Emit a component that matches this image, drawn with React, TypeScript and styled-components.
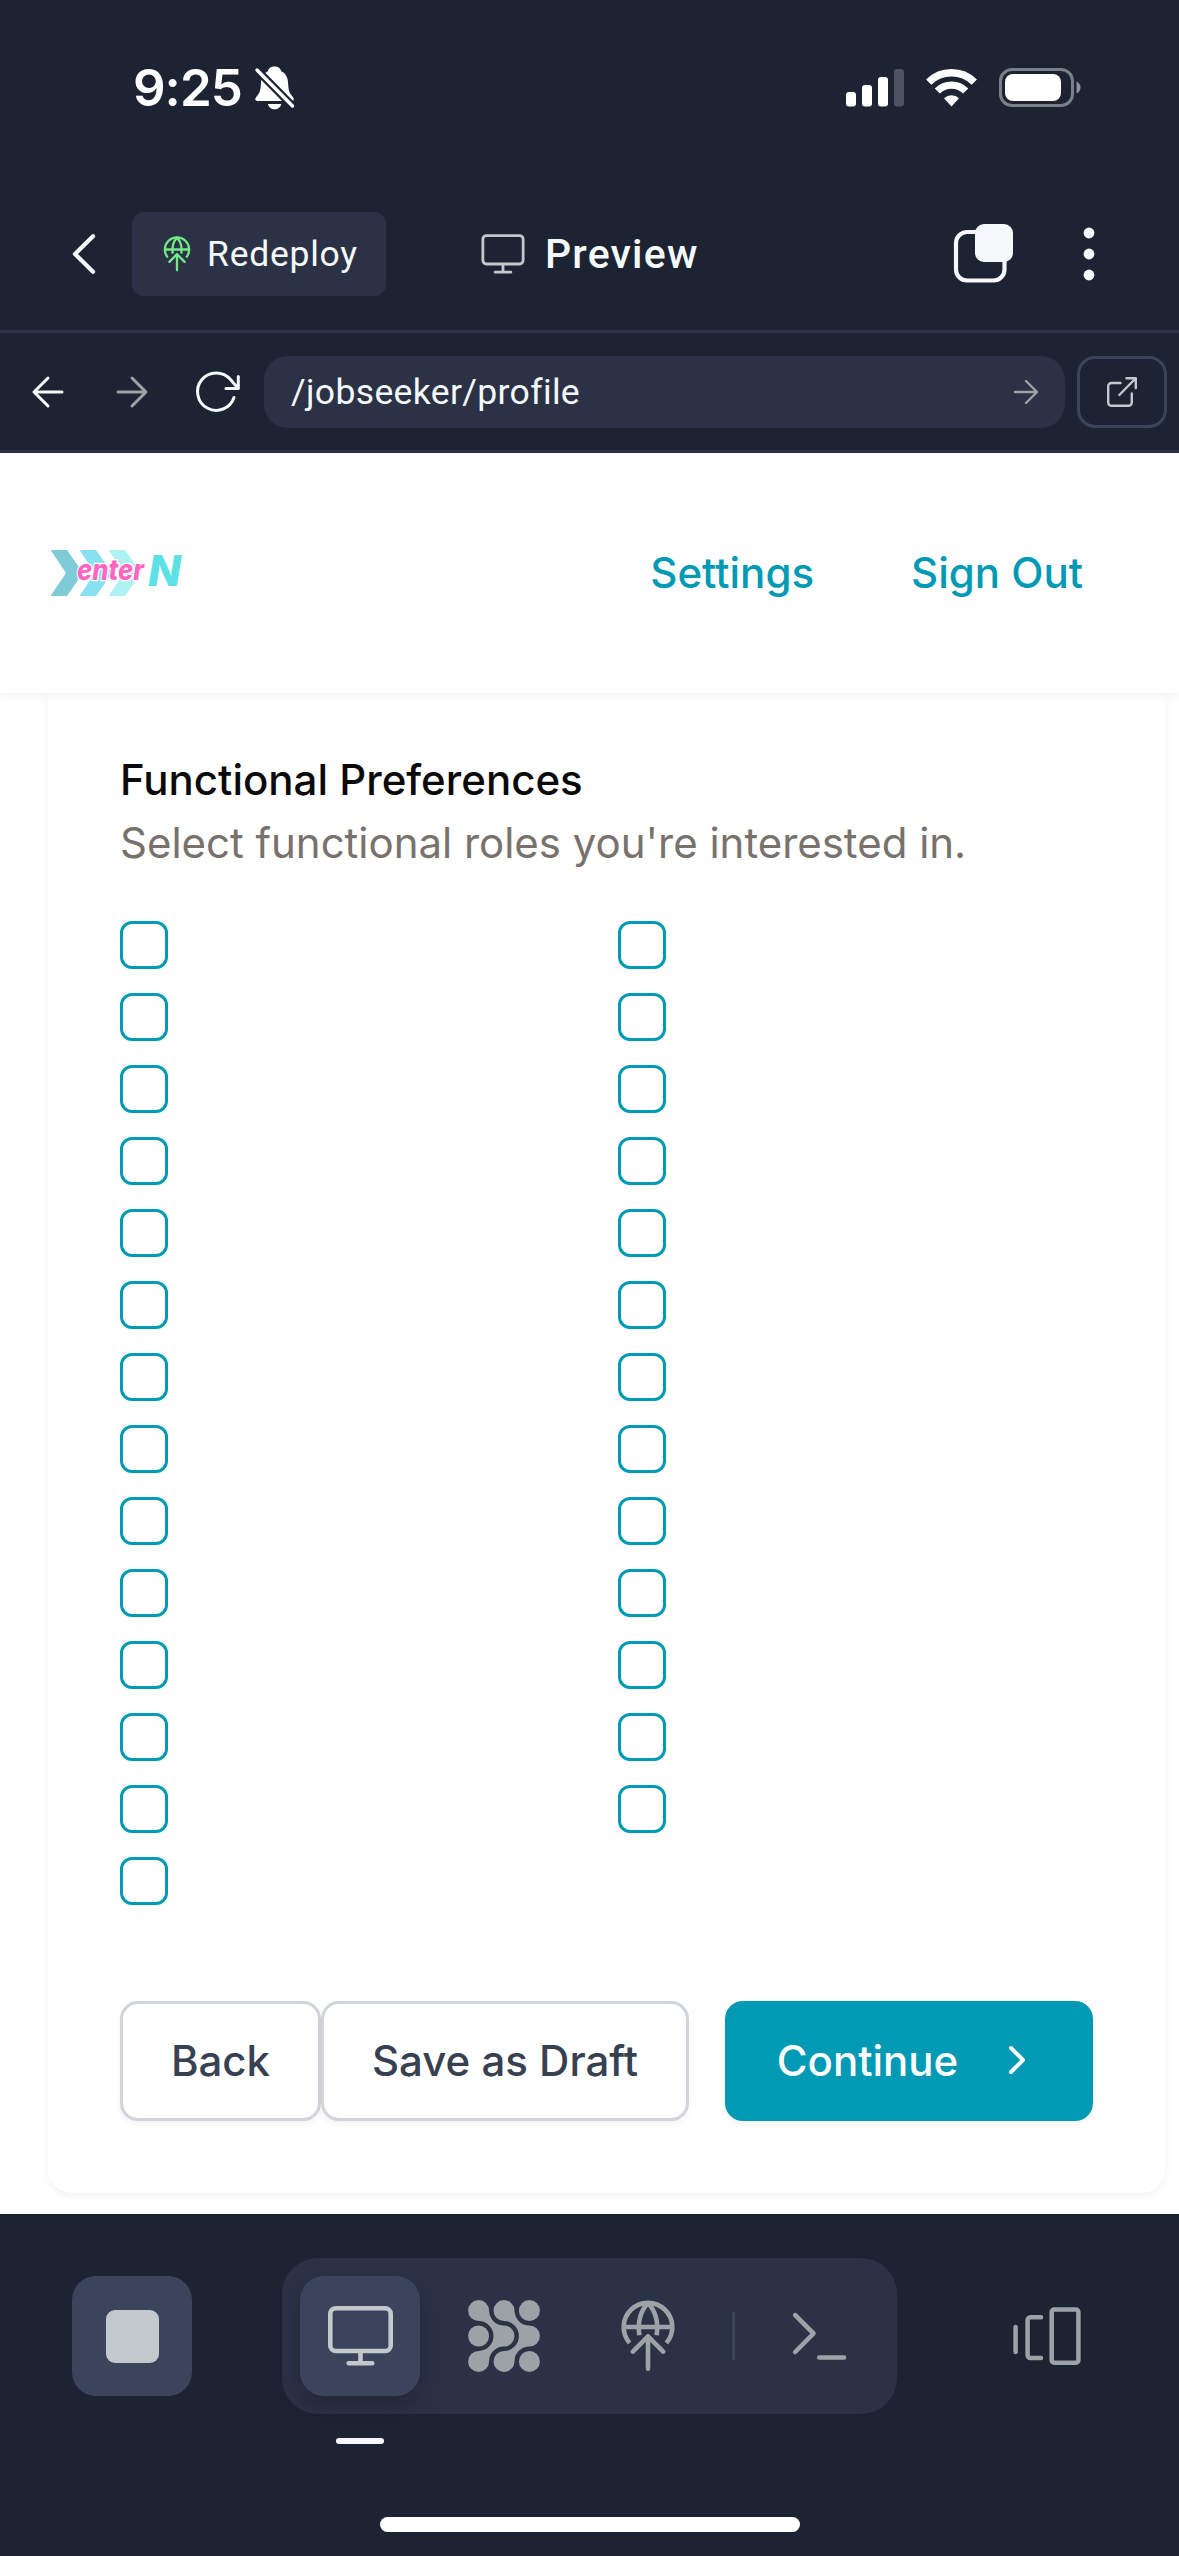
import React from "react";
import styled, { createGlobalStyle } from "styled-components";

const c = {
  root: "#1c2333",
  raised: "#2b3245",
  outline: "#3c445c",
  fg: "#f5f9fc",
  dim: "#c2c8cc",
  dimmest: "#9da2a6",
  teal: "#009ab5",
};

const ui = `Roboto, "Noto Sans", sans-serif`;

const GlobalStyle = createGlobalStyle`
  *, *::before, *::after { box-sizing: border-box; }
  body { margin: 0; background: ${c.root}; font-family: Inter, "Liberation Sans", sans-serif; }
  button { font: inherit; margin: 0; padding: 0; border: 0; background: none; color: inherit; }
  svg { display: block; flex: none; overflow: visible; }
`;

const Screen = styled.div`
  display: flex;
  flex-direction: column;
  width: 1179px;
  height: 2556px;
  overflow: hidden;
  background: ${c.root};
`;

const StatusBar = styled.div`
  display: flex;
  align-items: center;
  justify-content: space-between;
  height: 176px;
  padding: 0 98px 0 133px;
`;

const Clock = styled.div`
  display: flex;
  align-items: center;
  gap: 13px;
  color: #fff;
  font-size: 51px;
  font-weight: 600;
  line-height: 60px;
  letter-spacing: -1px;
`;

const StatusIcons = styled.div`
  display: flex;
  align-items: center;
  gap: 22px;
`;

const AppHeader = styled.header`
  display: flex;
  align-items: center;
  height: 157px;
  padding: 2px 84px 0 72px;
  border-bottom: 3px solid ${c.raised};
  font-family: ${ui};
  color: ${c.fg};
`;

const BackButton = styled.button`
  width: 60px;
`;

const RedeployButton = styled.button`
  display: flex;
  align-items: center;
  gap: 12px;
  width: 254px;
  height: 84px;
  padding-left: 27px;
  border-radius: 12px;
  background: ${c.raised};
  font-size: 35.5px;
  letter-spacing: 0.75px;
`;

const Title = styled.div`
  display: flex;
  align-items: center;
  gap: 20px;
  margin-left: 95px;
  font-size: 41px;
  font-weight: 500;
  letter-spacing: 1.2px;
`;

const HeaderActions = styled.div`
  display: flex;
  align-items: center;
  gap: 69px;
  margin-left: auto;
`;

const NavBar = styled.nav`
  display: flex;
  align-items: center;
  height: 120px;
  padding: 0 12px 0 6px;
  border-bottom: 3px solid ${c.raised};
`;

const NavButton = styled.button`
  display: flex;
  align-items: center;
  justify-content: center;
  width: 84px;
  height: 84px;
`;

const AddressField = styled.div`
  display: flex;
  align-items: center;
  justify-content: space-between;
  flex: 1;
  height: 72px;
  margin: 0 12px 0 6px;
  padding: 0 27px;
  border-radius: 24px;
  background: ${c.raised};
  color: ${c.fg};
  font-family: ${ui};
  font-size: 35.5px;
  letter-spacing: 0.35px;
`;

const OpenButton = styled.button`
  display: flex;
  align-items: center;
  justify-content: center;
  width: 90px;
  height: 72px;
  border: 3px solid ${c.outline};
  border-radius: 18px;
`;

const Page = styled.main`
  display: flex;
  flex-direction: column;
  height: 1761px;
  overflow: hidden;
  background: #fff;
`;

const SiteHeader = styled.header`
  position: relative;
  z-index: 1;
  display: flex;
  align-items: center;
  justify-content: space-between;
  flex: none;
  height: 240px;
  padding: 0 96px 0 48px;
  background: #fff;
  box-shadow: 0 3px 9px rgba(0, 0, 0, 0.05);
`;

const SiteLinks = styled.div`
  display: flex;
  gap: 97px;
`;

const SiteLink = styled.a`
  color: ${c.teal};
  font-size: 42px;
  font-weight: 500;
  line-height: 60px;
`;

const Card = styled.section`
  height: 1500px;
  margin: 0 14px 0 48px;
  padding: 55px 72px 0;
  border-radius: 0 0 24px 24px;
  background: #fff;
  box-shadow: 0 3px 9px rgba(0, 0, 0, 0.05);
`;

const Heading = styled.h2`
  margin: 0;
  color: #0a0a0a;
  font-size: 42px;
  font-weight: 500;
  line-height: 63px;
`;

const Description = styled.p`
  margin: 0;
  color: #78716c;
  font-size: 42px;
  line-height: 63px;
  letter-spacing: -0.02px;
`;

const CheckGrid = styled.div`
  display: grid;
  grid-template-columns: 1fr 1fr;
  gap: 24px 23px;
  margin-top: 47px;
`;

const Checkbox = styled.button`
  width: 48px;
  height: 48px;
  border: 3px solid ${c.teal};
  border-radius: 12px;
  background: #fff;
`;

const FormActions = styled.div`
  display: flex;
  justify-content: space-between;
  margin-top: 96px;
`;

const ActionGroup = styled.div`
  display: flex;
`;

const ActionButton = styled.button<{ $primary?: boolean; $width: number }>`
  display: flex;
  align-items: center;
  justify-content: center;
  gap: 35px;
  width: ${(p) => p.$width}px;
  height: 120px;
  padding-bottom: 2px;
  border: 3px solid ${(p) => (p.$primary ? c.teal : "#d1d5db")};
  border-radius: 18px;
  background: ${(p) => (p.$primary ? c.teal : "#fff")};
  color: ${(p) => (p.$primary ? "#fff" : "#374151")};
  font-size: 42px;
  font-weight: 500;
  box-shadow: 0 3px 6px rgba(0, 0, 0, 0.05);
`;

const Dock = styled.footer`
  display: flex;
  flex: 1;
  flex-direction: column;
  align-items: center;
  padding-top: 44px;
`;

const DockRow = styled.div`
  display: flex;
  align-items: center;
  width: 100%;
  padding: 0 98px 0 72px;
`;

const DockButton = styled.button<{ $active?: boolean; $shadow?: boolean }>`
  display: flex;
  align-items: center;
  justify-content: center;
  width: 120px;
  height: 120px;
  border-radius: 24px;
  background: ${(p) => (p.$active ? c.outline : "transparent")};
  box-shadow: ${(p) => (p.$shadow ? "0 12px 24px rgba(2, 2, 3, 0.2)" : "none")};
`;

const StopSquare = styled.span`
  width: 53px;
  height: 53px;
  border-radius: 9px;
  background: ${c.dim};
`;

const ToolGroup = styled.div`
  display: flex;
  align-items: center;
  gap: 24px;
  width: 615px;
  height: 156px;
  margin-left: 90px;
  padding: 0 18px;
  border-radius: 36px;
  background: ${c.raised};
`;

const Divider = styled.span`
  width: 3px;
  height: 48px;
  background: ${c.outline};
`;

const DeviceButton = styled.button`
  margin-left: auto;
`;

const ActiveMark = styled.span`
  align-self: flex-start;
  width: 48px;
  height: 6px;
  margin: 24px 0 0 336px;
  border-radius: 3px;
  background: ${c.fg};
`;

const HomeIndicator = styled.span`
  width: 420px;
  height: 15px;
  margin-top: 73px;
  border-radius: 8px;
  background: #fff;
`;

const LogoText = styled.text`
  font-family: Inter, "Liberation Sans", sans-serif;
  font-style: italic;
  font-weight: 800;
`;

type StrokeProps = {
  w: number;
  h: number;
  color?: string;
  sw?: number;
  box?: string;
  children: React.ReactNode;
};

const Stroke = ({ w, h, color = c.fg, sw = 3, box, children }: StrokeProps) => (
  <svg
    width={w}
    height={h}
    viewBox={box ?? `0 0 ${w} ${h}`}
    fill="none"
    stroke={color}
    strokeWidth={sw}
    strokeLinecap="round"
    strokeLinejoin="round"
  >
    {children}
  </svg>
);

const BellOff = () => (
  <svg width="40" height="44" viewBox="0 0 40 44" fill="#fff">
    <path d="M19.500 0.500c-3.600 0-6.100 2-6.600 4.800C8.600 7.300 6.300 11.300 6 17c-.3 6.500-1 9.500-3.600 12.500C.9 31.200.3 32.300.3 33.300c0 1 .8 1.700 2 1.700h34.400c1.300 0 2-.7 2-1.700 0-1-.5-2.100-2-3.800-2.700-3-3.300-6-3.600-12.500-.3-5.700-2.600-9.700-6.900-11.700C25.700 2.500 23.100.5 19.500.5Z" />
    <path d="M13 38h13.200c-.6 3.200-3.200 5.300-6.600 5.300S13.600 41.200 13 38Z" />
    <path d="M2 4 37.500 40" stroke={c.root} strokeWidth="8" />
    <path d="M2 4 37.500 40" stroke="#fff" strokeWidth="3.400" strokeLinecap="round" />
  </svg>
);

const Signal = () => (
  <svg width="58" height="38" viewBox="0 0 58 38" fill="#fff">
    <rect x="0" y="23" width="10" height="14.500" rx="3" />
    <rect x="16" y="16" width="10" height="21.500" rx="3" />
    <rect x="32" y="8" width="10" height="29.500" rx="3" />
    <rect x="48" y="0" width="10" height="37.500" rx="3" opacity="0.220" />
  </svg>
);

const Wifi = () => (
  <svg width="51" height="38" viewBox="0 0 51 38">
    <g fill="none" stroke="#fff">
      <path d="M2.700 13.200a32.500 32.500 0 0 1 45.600 0" strokeWidth="7.500" />
      <path d="M11.300 22a20.200 20.200 0 0 1 28.400 0" strokeWidth="7.300" />
    </g>
    <path d="M18 29.300a10.800 10.800 0 0 1 15 0L25.500 37.500Z" fill="#fff" />
  </svg>
);

const Battery = () => (
  <svg width="82" height="40" viewBox="0 0 82 40">
    <rect x="1.500" y="1.500" width="72" height="36" rx="11.500" fill="none" stroke="#fff" strokeOpacity="0.420" strokeWidth="3" />
    <rect x="6" y="6" width="56" height="27" rx="8" fill="#fff" />
    <path d="M77.500 13.500c2.700 1 4 3.400 4 6s-1.300 5-4 6Z" fill="#fff" fillOpacity="0.500" />
  </svg>
);

const Globe = ({ size, color }: { size: number; color: string }) => (
  <Stroke w={size} h={size} box="0 0 72 72" color={color} sw={4.6}>
    <path d="M17.600 43A24.300 24.300 0 1 1 54.400 43M12 27h48" strokeLinecap="butt" />
    <path d="M27.300 35.300C25.500 22 28.500 11 36 3.200c7.500 7.800 10.500 18.800 8.700 32.100" strokeLinecap="butt" />
    <path d="M36 68.700V36.500M20.800 51.700 36 36.300l15.200 15.400" />
  </Stroke>
);

const Monitor = ({ w, h, color, sw }: { w: number; h: number; color: string; sw: number }) => (
  <Stroke w={w} h={h} box="0 0 65 60" color={color} sw={sw}>
    <rect x="2.300" y="2.300" width="60.400" height="42.700" rx="5.500" />
    <path d="M32.500 46v11M20.700 57.300h23.600" />
  </Stroke>
);

const AgentIcon = () => {
  const ribbon =
    "M10.600.1A10.500 10.500 0 0 1 21.100 10.600A14.900 14.900 0 0 0 36 25.500A10.500 10.500 0 0 1 36 46.500A14.900 14.900 0 0 0 21.100 61.400A10.500 10.500 0 1 1 10.600 50.900A14.900 14.900 0 0 0 25.500 36A14.900 14.900 0 0 0 10.600 21.100A10.500 10.500 0 0 1 10.600.1Z";
  return (
    <svg width="72" height="72" viewBox="0 0 72 72" fill={c.dimmest}>
      <path d={ribbon} />
      <path d={ribbon} transform="translate(25.400 0)" />
      <circle cx="10.600" cy="36" r="10.500" />
      <circle cx="61.400" cy="10.600" r="10.500" />
      <circle cx="61.400" cy="61.400" r="10.500" />
    </svg>
  );
};

const Logo = () => (
  <svg width="136" height="48" viewBox="48 549 136 48" role="img" aria-label="enterN">
    <path d="M50.500 550H67l16 23-16 23H50.500L66 573Z" fill="#80cbd8" />
    <path d="M79.500 550H96l16 23-16 23H79.500L95 573Z" fill="#87e1f1" />
    <path d="M108.500 550H125l16 23-16 23h-16.500L124 573Z" fill="#adf1f1" />
    <LogoText
      x="77"
      y="579.500"
      fontSize="28"
      textLength="67"
      lengthAdjust="spacingAndGlyphs"
      fill="#ff66c4"
      stroke="#fff"
      strokeWidth="2.500"
      paintOrder="stroke"
    >
      enter
    </LogoText>
    <LogoText x="148" y="586" fontSize="42" textLength="33" lengthAdjust="spacingAndGlyphs" fill="#5ce1e6">
      N
    </LogoText>
  </svg>
);

const ROLE_COUNT = 27;

export default function App() {
  return (
    <>
      <GlobalStyle />
      <Screen>
        <StatusBar>
          <Clock>
            9:25
            <BellOff />
          </Clock>
          <StatusIcons>
            <Signal />
            <Wifi />
            <Battery />
          </StatusIcons>
        </StatusBar>

        <AppHeader>
          <BackButton aria-label="Back">
            <Stroke w={24} h={40} sw={4.2}>
              <path d="M21 2.300 3 20l18 17.700" />
            </Stroke>
          </BackButton>
          <RedeployButton>
            <Globe size={36} color="#72e888" />
            Redeploy
          </RedeployButton>
          <Title>
            <Monitor w={44} h={40} color={c.dim} sw={4.2} />
            Preview
          </Title>
          <HeaderActions>
            <svg width="60" height="60" viewBox="0 0 60 60">
              <rect x="2" y="8" width="48.500" height="48.500" rx="11" fill="none" stroke={c.fg} strokeWidth="4.200" />
              <rect x="21" y="0" width="38" height="38" rx="9" fill={c.fg} />
            </svg>
            <svg width="12" height="54" viewBox="0 0 12 54" fill={c.fg}>
              <circle cx="6" cy="6" r="5.400" />
              <circle cx="6" cy="27" r="5.400" />
              <circle cx="6" cy="48" r="5.400" />
            </svg>
          </HeaderActions>
        </AppHeader>

        <NavBar>
          <NavButton aria-label="Go back">
            <Stroke w={32} h={32}>
              <path d="M30 16H2.500M16 2 2 16l14 14" />
            </Stroke>
          </NavButton>
          <NavButton aria-label="Go forward">
            <Stroke w={32} h={32} color={c.dimmest}>
              <path d="M2 16h27.500M16 2l14 14-14 14" />
            </Stroke>
          </NavButton>
          <NavButton aria-label="Reload">
            <Stroke w={44} h={40} box="-2 0 44 40">
              <path d="M38 25.500A18.700 18.700 0 1 1 34.500 7.500L42 16.300M42.300 4.500v12H30" />
            </Stroke>
          </NavButton>
          <AddressField>
            /jobseeker/profile
            <Stroke w={24} h={24} color={c.dimmest} sw={2.4}>
              <path d="M1 12h21.500M12 1l11 11-11 11" />
            </Stroke>
          </AddressField>
          <OpenButton aria-label="Open in new tab">
            <Stroke w={30} h={30} color={c.dim} sw={2.4}>
              <path d="M13.500 6H4.500A3.300 3.300 0 0 0 1.200 9.300V25.500A3.300 3.300 0 0 0 4.500 28.800H21.500A3.300 3.300 0 0 0 24.800 25.500V16.500M19.500 1.200h9.300v9.800M28.500 1.500 12.300 18" />
            </Stroke>
          </OpenButton>
        </NavBar>

        <Page>
          <SiteHeader>
            <Logo />
            <SiteLinks>
              <SiteLink>Settings</SiteLink>
              <SiteLink>Sign Out</SiteLink>
            </SiteLinks>
          </SiteHeader>
          <Card>
            <Heading>Functional Preferences</Heading>
            <Description>Select functional roles you're interested in.</Description>
            <CheckGrid>
              {Array.from({ length: ROLE_COUNT }, (_, i) => (
                <Checkbox key={i} role="checkbox" aria-checked={false} />
              ))}
            </CheckGrid>
            <FormActions>
              <ActionGroup>
                <ActionButton $width={201}>Back</ActionButton>
                <ActionButton $width={368}>Save as Draft</ActionButton>
              </ActionGroup>
              <ActionButton $primary $width={368}>
                Continue
                <Stroke w={48} h={48} box="0 0 24 24" color="#fff" sw={2}>
                  <path d="m9 18 6-6-6-6" />
                </Stroke>
              </ActionButton>
            </FormActions>
          </Card>
        </Page>

        <Dock>
          <DockRow>
            <DockButton $active aria-label="Stop">
              <StopSquare />
            </DockButton>
            <ToolGroup>
              <DockButton $active $shadow aria-label="Preview">
                <Monitor w={65} h={60} color={c.dim} sw={4.6} />
              </DockButton>
              <DockButton aria-label="Agent">
                <AgentIcon />
              </DockButton>
              <DockButton aria-label="Deploy">
                <Globe size={72} color={c.dimmest} />
              </DockButton>
              <Divider />
              <DockButton aria-label="Shell">
                <Stroke w={54} h={48} color={c.dimmest} sw={4.6}>
                  <path d="M3.200 3.200 21.500 21.500 3.200 40M27.200 45.500h24.800" />
                </Stroke>
              </DockButton>
            </ToolGroup>
            <DeviceButton aria-label="Switch device">
              <Stroke w={68} h={58} color={c.dimmest} sw={4.5}>
                <path d="M2.600 20v25M28 10.300H17.500a2.900 2.900 0 0 0-2.900 2.900V48a2.900 2.900 0 0 0 2.900 2.900H28" />
                <rect x="38.700" y="2.500" width="26.700" height="53.200" rx="2.500" />
              </Stroke>
            </DeviceButton>
          </DockRow>
          <ActiveMark />
          <HomeIndicator />
        </Dock>
      </Screen>
    </>
  );
}
